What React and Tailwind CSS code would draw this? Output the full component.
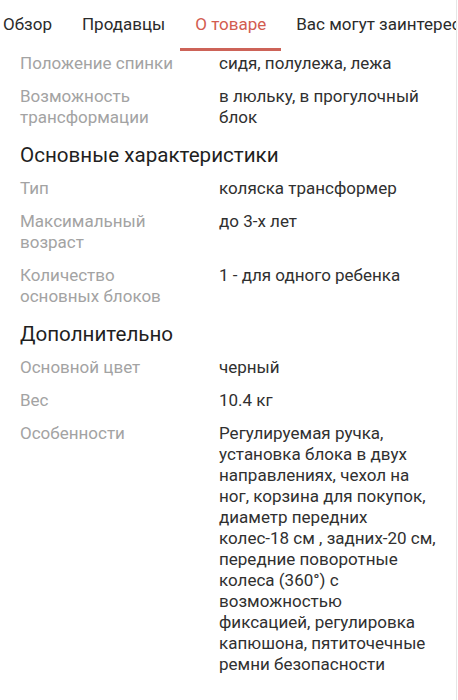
import React from "react";

const tabs = ["Обзор", "Продавцы", "О товаре", "Вас могут заинтересовать"];

function Row({ label, value, first }) {
  return (
    <div className={`grid grid-cols-[165px_1fr] gap-x-[34px] pl-5 pr-[19px] ${first ? "pt-[2px]" : "pt-[6px]"} pb-[6px]`}>
      <div className="text-[#a3a3a3]">{label}</div>
      <div className="text-[#303030]">{value}</div>
    </div>
  );
}

function Heading({ children }) {
  return (
    <div className="pl-5 pt-[8px] pb-[4px] text-[20.6px] leading-[26px] text-[#1f1f1f]">{children}</div>
  );
}

export default function App() {
  return (
    <div
      className="w-[457px] min-h-[700px] bg-white border-r border-[#e6e6e6] overflow-hidden text-[17px] leading-[21px]"
      style={{ fontFamily: "Roboto, 'Noto Sans', sans-serif" }}
    >
      <div className="flex h-[51px] -ml-[12px] whitespace-nowrap">
        {tabs.map((t) => {
          const active = t === "О товаре";
          return (
            <div key={t} className="flex flex-col shrink-0">
              <div className={`flex-1 flex items-center px-[15px] pt-[1px] ${active ? "text-[#d25c4f]" : "text-[#2b2b2b]"}`}>
                {t}
              </div>
              <div className={`h-[3px] ${active ? "bg-[#cd6358]" : "bg-transparent"}`} />
            </div>
          );
        })}
      </div>
      <Row first label="Положение спинки" value="сидя, полулежа, лежа" />
      <Row label="Возможность трансформации" value="в люльку, в прогулочный блок" />
      <Heading>Основные характеристики</Heading>
      <Row label="Тип" value="коляска трансформер" />
      <Row label="Максимальный возраст" value="до 3-х лет" />
      <Row label="Количество основных блоков" value="1 - для одного ребенка" />
      <Heading>Дополнительно</Heading>
      <Row label="Основной цвет" value="черный" />
      <Row label="Вес" value="10.4 кг" />
      <Row
        label="Особенности"
        value="Регулируемая ручка, установка блока в двух направлениях, чехол на ног, корзина для покупок, диаметр передних колес-18 см , задних-20 см, передние поворотные колеса (360°) с возможностью фиксацией, регулировка капюшона, пятиточечные ремни безопасности"
      />
    </div>
  );
}
